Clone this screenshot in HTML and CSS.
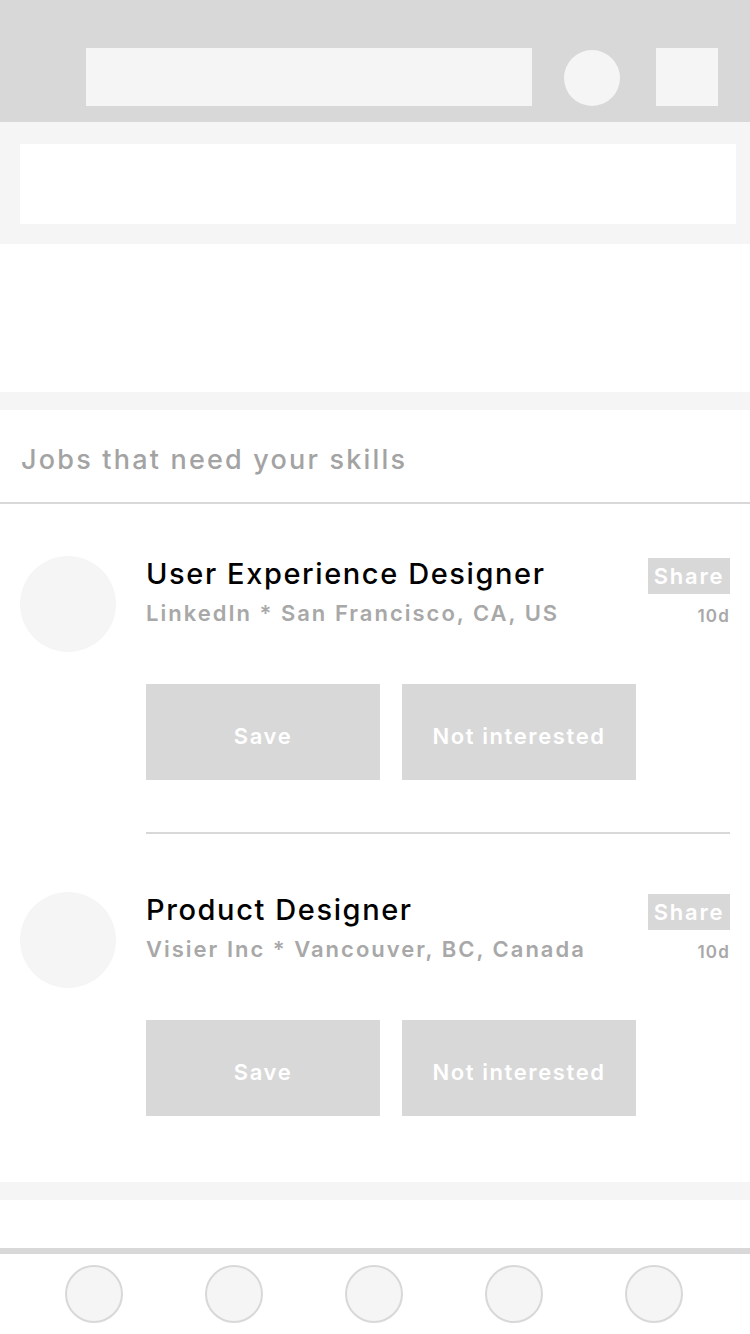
FILE: index.html
```html
<!DOCTYPE html>
<html>
<head>
<meta charset="utf-8">
<link rel="stylesheet" href="styles.css">
</head>
<body>
<div class="app">
  <header class="topbar">
    <div class="search"></div>
    <div class="round"></div>
    <div class="square"></div>
  </header>
  <div class="banner"><div class="banner-box"></div></div>
  <div class="blank"></div>
  <div class="gap"></div>
  <section class="jobs">
    <h2 class="jobs-title">Jobs that need your skills</h2>
    <div class="job">
      <div class="avatar"></div>
      <div class="job-body">
        <div class="job-head">
          <div class="job-info">
            <div class="job-name">User Experience Designer</div>
            <div class="job-meta">LinkedIn * San Francisco, CA, US</div>
          </div>
          <div class="job-side">
            <span class="share">Share</span>
            <span class="age">10d</span>
          </div>
        </div>
        <div class="actions">
          <button class="btn">Save</button>
          <button class="btn">Not interested</button>
        </div>
      </div>
    </div>
    <div class="job-sep"></div>
    <div class="job">
      <div class="avatar"></div>
      <div class="job-body">
        <div class="job-head">
          <div class="job-info">
            <div class="job-name">Product Designer</div>
            <div class="job-meta">Visier Inc * Vancouver, BC, Canada</div>
          </div>
          <div class="job-side">
            <span class="share">Share</span>
            <span class="age">10d</span>
          </div>
        </div>
        <div class="actions">
          <button class="btn">Save</button>
          <button class="btn">Not interested</button>
        </div>
      </div>
    </div>
  </section>
  <div class="gap"></div>
  <div class="blank-small"></div>
  <nav class="tabbar">
    <span class="tab"></span>
    <span class="tab"></span>
    <span class="tab"></span>
    <span class="tab"></span>
    <span class="tab"></span>
  </nav>
</div>
</body>
</html>
```
FILE: styles.css
```css
* { box-sizing: border-box; }
html, body { margin: 0; padding: 0; background: #fff; }
body { font-family: Inter, "Liberation Sans", sans-serif; }
.app { width: 750px; height: 1334px; overflow: hidden; display: flex; flex-direction: column; }

.topbar {
  height: 122px; background: #d8d8d8;
  display: flex; align-items: flex-start;
  padding: 48px 32px 0 86px;
}
.search { width: 446px; height: 58px; background: #f5f5f5; }
.round { width: 56px; height: 56px; border-radius: 50%; background: #f5f5f5; margin: 2px 0 0 32px; }
.square { width: 62px; height: 58px; background: #f5f5f5; margin-left: 36px; }

.banner { height: 122px; background: #f5f5f5; padding: 22px 14px 20px 20px; }
.banner-box { height: 80px; background: #fff; }
.blank { height: 148px; }
.gap { height: 18px; background: #f5f5f5; flex: none; }

.jobs { height: 772px; }
.jobs-title {
  margin: 0; height: 94px; padding: 33px 0 0 21px;
  font-size: 27px; font-weight: 500; color: #a3a3a3; letter-spacing: 2.2px;
  border-bottom: 2px solid #d8d8d8; line-height: 34px;
}
.job { display: flex; padding: 52px 20px 0 20px; }
.job-sep + .job { padding-top: 58px; }
.avatar { width: 96px; height: 96px; border-radius: 50%; background: #f5f5f5; flex: none; }
.job-body { flex: 1; margin-left: 30px; }
.job-head { display: flex; justify-content: space-between; height: 96px; }
.job-name { font-size: 29px; font-weight: 500; color: #000; letter-spacing: 1.6px; line-height: 36px; }
.job-meta { font-size: 22px; font-weight: 600; color: #a8a8a8; letter-spacing: 2px; line-height: 30px; margin-top: 6px; white-space: nowrap; }
.job-side { display: flex; flex-direction: column; align-items: flex-end; }
.share {
  background: #d8d8d8; color: #fff; font-size: 22px; font-weight: 600;
  height: 36px; width: 82px; line-height: 36px; text-align: center; letter-spacing: 1.8px; margin-top: 2px;
}
.age { font-size: 17px; font-weight: 600; color: #a8a8a8; margin-top: 12px; letter-spacing: 1.2px; }
.actions { display: flex; gap: 22px; margin-top: 32px; }
.btn {
  width: 234px; height: 96px; border: 0; background: #d8d8d8; color: #fff;
  font-family: inherit; font-size: 22px; font-weight: 600; letter-spacing: 1.6px; padding: 7px 0 0;
}
.job-sep { height: 2px; background: #d8d8d8; margin: 52px 20px 0 146px; }

.blank-small { height: 48px; }
.tabbar {
  flex: 1; border-top: 6px solid #d8d8d8;
  display: flex; justify-content: space-between; padding: 11px 67px 0 65px;
}
.tab { width: 58px; height: 58px; border-radius: 50%; background: #f5f5f5; border: 2px solid #d8d8d8; }
```
